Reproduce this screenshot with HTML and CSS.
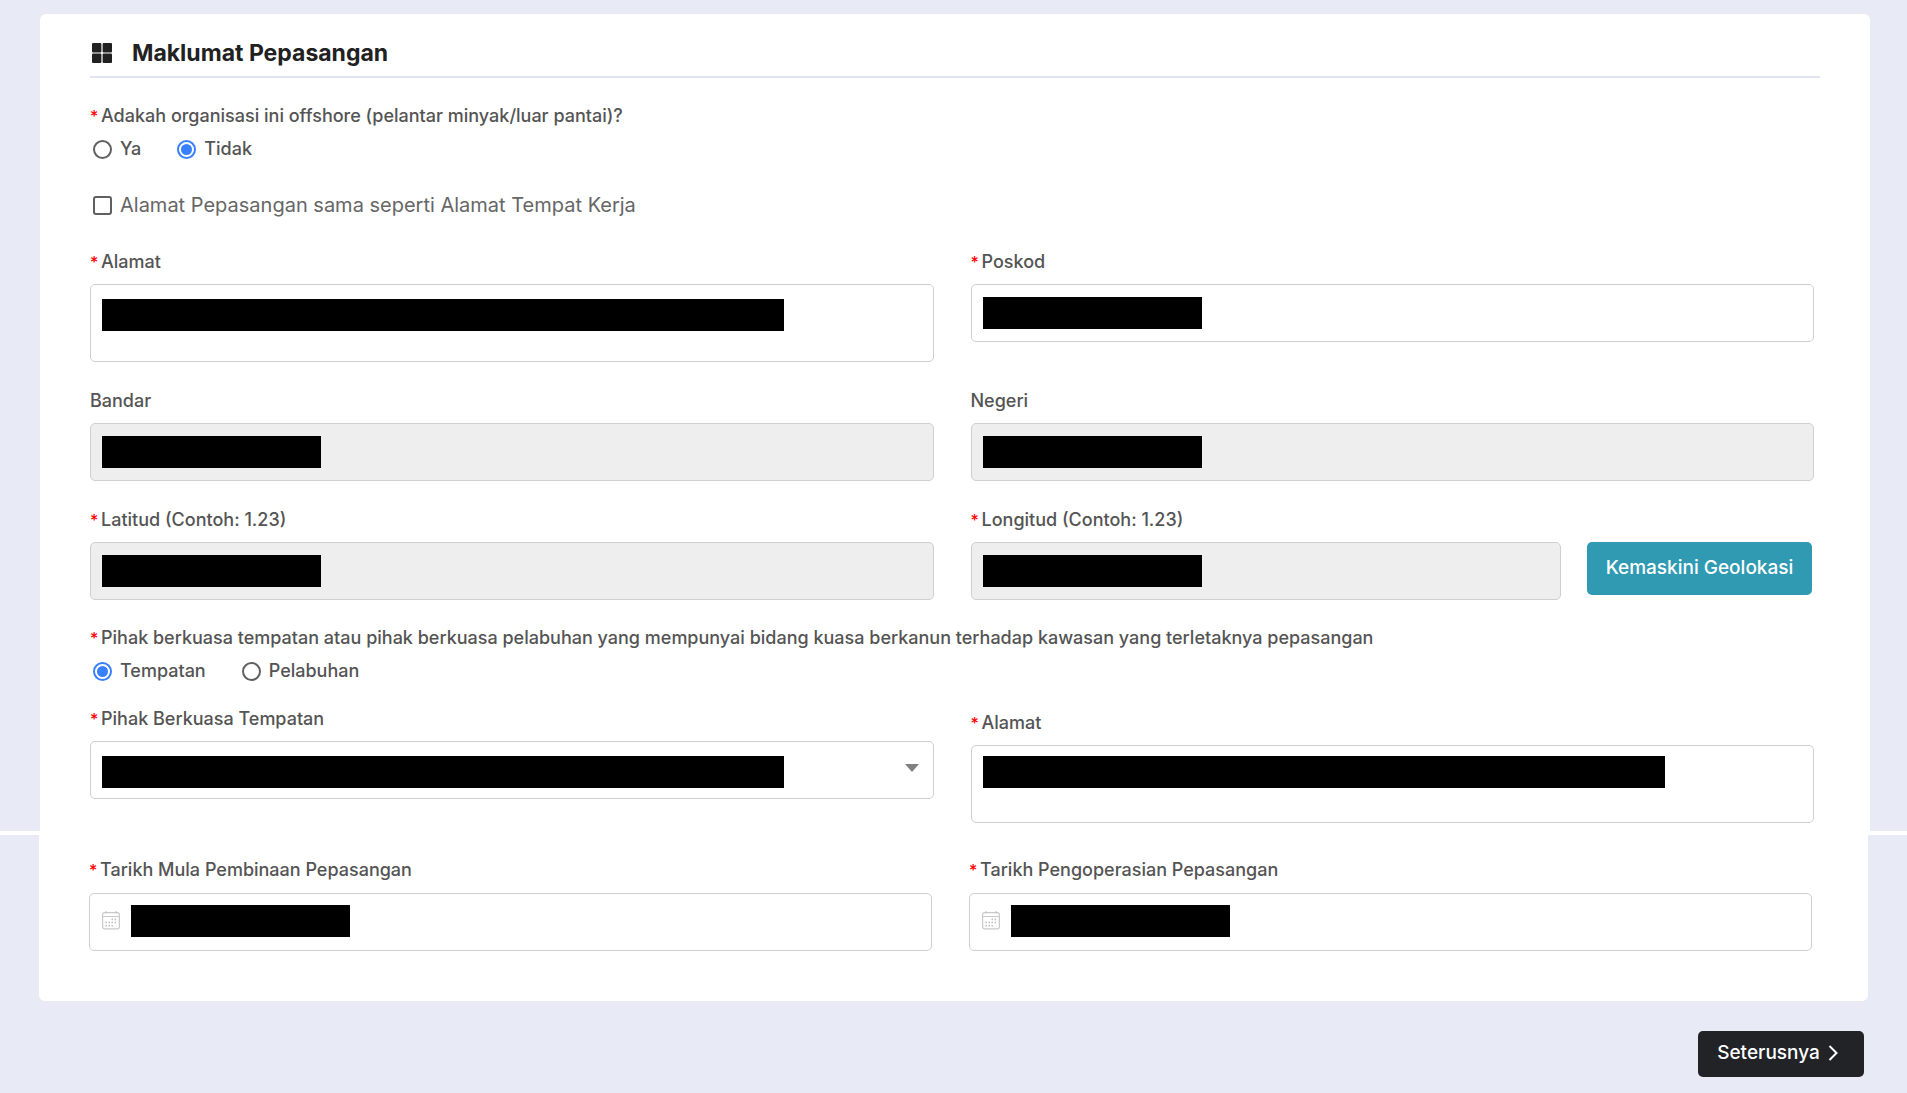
FILE: index.html
```html
<!DOCTYPE html>
<html lang="ms">
<head>
<meta charset="utf-8">
<meta name="viewport" content="width=device-width, initial-scale=1">
<title>Maklumat Pepasangan</title>
<link rel="stylesheet" href="styles.css">
</head>
<body>
<form class="form">
  <div class="page page-main">
    <section class="card card-main">
      <header class="card-header">
        <svg class="grid-icon" viewBox="0 0 20 20" aria-hidden="true">
          <rect x="0" y="0" width="9.400" height="9.400" rx="1"/>
          <rect x="10.600" y="0" width="9.400" height="9.400" rx="1"/>
          <rect x="0" y="10.600" width="9.400" height="9.400" rx="1"/>
          <rect x="10.600" y="10.600" width="9.400" height="9.400" rx="1"/>
        </svg>
        <h1 class="title">Maklumat Pepasangan</h1>
      </header>

      <fieldset class="choices">
        <legend class="label required">Adakah organisasi ini offshore (pelantar minyak/luar pantai)?</legend>
        <div class="options">
          <label class="option"><input class="radio" type="radio" name="offshore">Ya</label>
          <label class="option"><input class="radio" type="radio" name="offshore" checked>Tidak</label>
        </div>
      </fieldset>

      <label class="same-address"><input class="checkbox" type="checkbox">Alamat Pepasangan sama seperti Alamat Tempat Kerja</label>

      <div class="row">
        <div class="field">
          <label class="label required" for="alamat">Alamat</label>
          <textarea class="control area masked-long" id="alamat"></textarea>
        </div>
        <div class="field">
          <label class="label required" for="poskod">Poskod</label>
          <input class="control masked" id="poskod" type="text">
        </div>
      </div>

      <div class="row">
        <div class="field">
          <label class="label" for="bandar">Bandar</label>
          <input class="control masked" id="bandar" type="text" disabled>
        </div>
        <div class="field">
          <label class="label" for="negeri">Negeri</label>
          <input class="control masked" id="negeri" type="text" disabled>
        </div>
      </div>

      <div class="row">
        <div class="field">
          <label class="label required" for="latitud">Latitud (Contoh: 1.23)</label>
          <input class="control masked" id="latitud" type="text" disabled>
        </div>
        <div class="field">
          <label class="label required" for="longitud">Longitud (Contoh: 1.23)</label>
          <div class="with-button">
            <input class="control masked" id="longitud" type="text" disabled>
            <button class="button button-geo" type="button">Kemaskini Geolokasi</button>
          </div>
        </div>
      </div>

      <fieldset class="choices">
        <legend class="label required">Pihak berkuasa tempatan atau pihak berkuasa pelabuhan yang mempunyai bidang kuasa berkanun terhadap kawasan yang terletaknya pepasangan</legend>
        <div class="options">
          <label class="option"><input class="radio" type="radio" name="pihak" checked>Tempatan</label>
          <label class="option"><input class="radio" type="radio" name="pihak">Pelabuhan</label>
        </div>
      </fieldset>

      <div class="row row-authority">
        <div class="field">
          <label class="label required" for="pbt">Pihak Berkuasa Tempatan</label>
          <div class="icon-box">
            <select class="control masked-long" id="pbt"></select>
            <svg class="caret" viewBox="0 0 14 8" aria-hidden="true"><path d="M0 0h14L7 8z"/></svg>
          </div>
        </div>
        <div class="field field-lower">
          <label class="label required" for="alamat-pbt">Alamat</label>
          <textarea class="control area masked-long masked-high" id="alamat-pbt"></textarea>
        </div>
      </div>
    </section>
  </div>

  <div class="page page-dates">
    <section class="card card-dates">
      <div class="row row-dates">
        <div class="field">
          <label class="label required" for="mula">Tarikh Mula Pembinaan Pepasangan</label>
          <div class="icon-box">
            <input class="control masked masked-date" id="mula" type="text">
            <svg class="calendar" viewBox="0 0 18 19" aria-hidden="true"><use href="#calendar"/></svg>
          </div>
        </div>
        <div class="field">
          <label class="label required" for="operasi">Tarikh Pengoperasian Pepasangan</label>
          <div class="icon-box">
            <input class="control masked masked-date" id="operasi" type="text">
            <svg class="calendar" viewBox="0 0 18 19" aria-hidden="true"><use href="#calendar"/></svg>
          </div>
        </div>
      </div>
    </section>
    <div class="actions">
      <button class="button button-next" type="submit">Seterusnya
        <svg class="chevron" viewBox="0 0 10 16" aria-hidden="true"><path d="M1.500 1 8.500 8l-7 7"/></svg>
      </button>
    </div>
  </div>
</form>

<svg class="symbols" aria-hidden="true">
  <symbol id="calendar" viewBox="0 0 18 19">
    <rect x=".6" y="1.600" width="16.800" height="16.200" rx="2" fill="none" stroke="#c9c9c9" stroke-width="1.200"/>
    <path d="M1 5.500h16M4 0v2.500M14 0v2.500" fill="none" stroke="#c9c9c9" stroke-width="1.200"/>
    <path d="M9.500 8.500h1.500M12.500 8.500H14M3.500 11.500H5M6.500 11.500H8M9.500 11.500h1.500M12.500 11.500H14M3.500 14.800H5M6.500 14.800H8M9.500 14.800h1.500" fill="none" stroke="#bdbdbd" stroke-width="1.500"/>
  </symbol>
</svg>
</body>
</html>
```
FILE: styles.css
```css
* {
  box-sizing: border-box;
}

body {
  margin: 0;
  background: #e8ebf5;
  color: #545454;
  font: 500 18px/24px Inter, "Liberation Sans", sans-serif;
}

.page-main {
  padding: 14px 37px 0 40px;
  border-bottom: 4px solid #fff;
}

.page-dates {
  padding: 0 39px 17px;
}

.card {
  background: #fff;
  padding: 0 50px;
}

.card-main {
  padding-top: 23px;
  padding-bottom: 8px;
  border-radius: 6px 6px 0 0;
}

.card-dates {
  padding-top: 22px;
  padding-bottom: 50px;
  border-radius: 0 0 6px 6px;
}

.card-header {
  display: flex;
  align-items: center;
  gap: 20px;
  padding: 0 2px 7px;
  border-bottom: 2px solid #dee5ee;
}

.grid-icon {
  width: 20px;
  height: 20px;
  fill: #212121;
}

.title {
  margin: 0;
  color: #212121;
  font-size: 23px;
  font-weight: 700;
  line-height: 32px;
}

.choices {
  margin: 25px 0 0;
  padding: 0;
  border: 0;
  min-width: 0;
}

.label {
  display: block;
  padding: 1px 0 0;
}

.required::before {
  content: "*";
  display: inline-block;
  width: 11px;
  color: #f00;
  font-size: 16px;
  line-height: 20px;
}

.options {
  display: flex;
  gap: 36px;
  padding: 9px 0 0 3px;
}

.option {
  display: flex;
  align-items: center;
  gap: 8px;
}

.radio,
.checkbox {
  appearance: none;
  flex: none;
  display: grid;
  place-items: center;
  width: 19px;
  height: 19px;
  margin: 0;
  border: 2px solid #606060;
  border-radius: 50%;
}

.radio:checked {
  border-color: #3880ff;
}

.radio:checked::before {
  content: "";
  width: 11px;
  height: 11px;
  border-radius: 50%;
  background: #3880ff;
}

.same-address {
  display: flex;
  align-items: center;
  gap: 8px;
  margin-top: 32px;
  padding-left: 3px;
  color: #666;
  font-size: 20px;
  font-weight: 400;
}

.checkbox {
  border-radius: 3px;
}

.row {
  display: grid;
  grid-template-columns: 1fr 1fr;
  align-items: start;
  gap: 37px;
  margin-top: 26px;
  padding-right: 6px;
}

.same-address + .row {
  margin-top: 32px;
}

.row-authority {
  margin-top: 23px;
}

.row-dates {
  margin-top: 0;
}

.field {
  display: grid;
  gap: 10px;
  min-width: 0;
}

.row-dates .field {
  gap: 11px;
}

.field-lower {
  padding-top: 4px;
}

.control {
  display: block;
  width: 100%;
  height: 58px;
  margin: 0;
  padding: 12px;
  border: 1px solid #cfcfcf;
  border-radius: 5px;
  background-color: #fff;
  color: #545454;
  font: inherit;
  appearance: none;
}

.control:disabled {
  background-color: #eee;
}

.area {
  height: 78px;
  resize: none;
}

/* Hidden personal values */
.masked,
.masked-long {
  background-image: linear-gradient(#000, #000);
  background-repeat: no-repeat;
  background-position: 11px 12px;
  background-size: 219px 32px;
}

.masked-long {
  background-position: 11px 14px;
  background-size: 682px 32px;
}

.masked-high {
  background-position-y: 10px;
}

.masked-date {
  background-position: 41px 11px;
  padding-left: 41px;
}

.icon-box {
  position: relative;
}

.caret {
  position: absolute;
  top: 23px;
  right: 15px;
  width: 14px;
  height: 8px;
  fill: #808080;
  pointer-events: none;
}

.calendar {
  position: absolute;
  top: 18px;
  left: 13px;
  width: 18px;
  height: 19px;
}

.with-button {
  display: flex;
  align-items: flex-start;
  gap: 26px;
  padding-right: 2px;
}

.with-button .control {
  flex: 1;
  min-width: 0;
}

.button {
  display: flex;
  align-items: center;
  justify-content: center;
  border: 0;
  border-radius: 5px;
  color: #fff;
  font: inherit;
  font-size: 19px;
  white-space: nowrap;
}

.button-geo {
  min-width: 225px;
  height: 53px;
  padding: 0 12px 2px;
  background: #309ab3;
}

.button-next {
  gap: 8px;
  min-width: 166px;
  height: 46px;
  padding: 0 26px 2px 19px;
  background: #222327;
}

.chevron {
  width: 10px;
  height: 16px;
  fill: none;
  stroke: #fff;
  stroke-width: 2;
}

.actions {
  display: flex;
  justify-content: flex-end;
  padding: 30px 4px 0;
}

.symbols {
  display: none;
}
```
